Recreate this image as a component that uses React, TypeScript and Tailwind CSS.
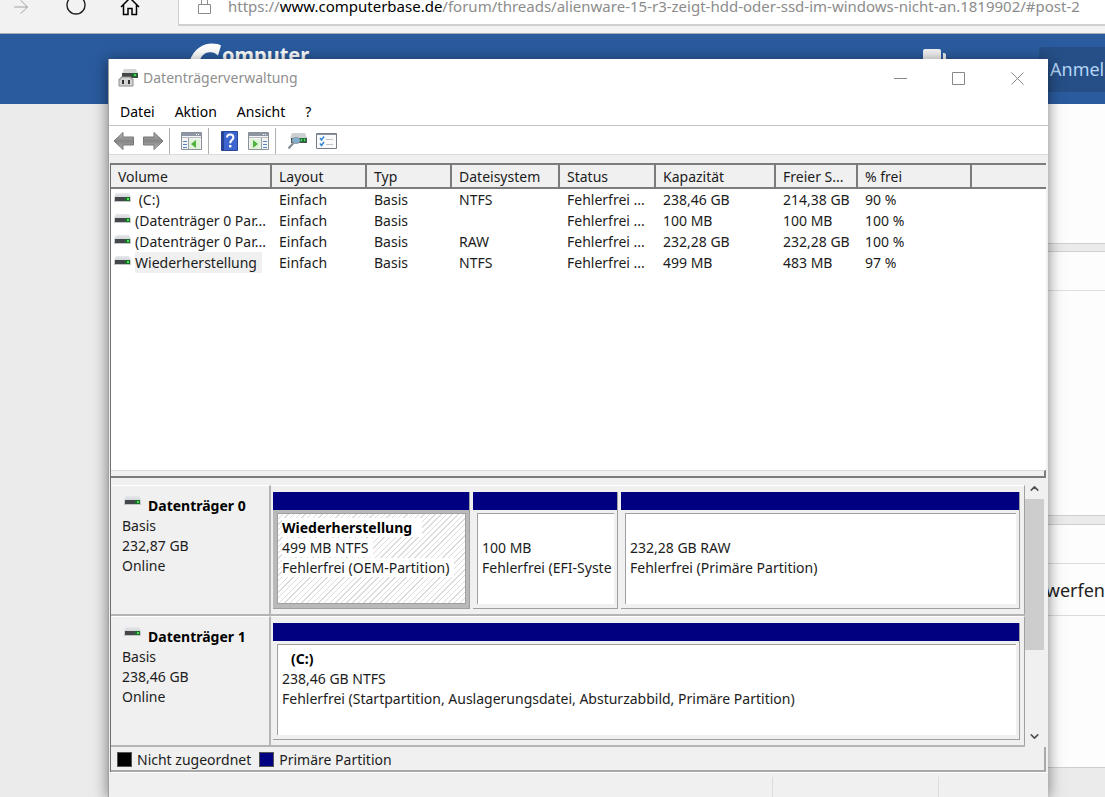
import type { ReactNode } from 'react';
import { ArrowRight, ChevronDown, ChevronUp, Lock } from 'lucide-react';

type Volume = {
  name: string;
  layout: string;
  type: string;
  fs: string;
  status: string;
  capacity: string;
  free: string;
  percent: string;
  selected?: boolean;
};

const volumes: Volume[] = [
  { name: '\u00a0(C:)', layout: 'Einfach', type: 'Basis', fs: 'NTFS', status: 'Fehlerfrei ...', capacity: '238,46 GB', free: '214,38 GB', percent: '90 %' },
  { name: '(Datenträger 0 Par...', layout: 'Einfach', type: 'Basis', fs: '', status: 'Fehlerfrei ...', capacity: '100 MB', free: '100 MB', percent: '100 %' },
  { name: '(Datenträger 0 Par...', layout: 'Einfach', type: 'Basis', fs: 'RAW', status: 'Fehlerfrei ...', capacity: '232,28 GB', free: '232,28 GB', percent: '100 %' },
  { name: 'Wiederherstellung', layout: 'Einfach', type: 'Basis', fs: 'NTFS', status: 'Fehlerfrei ...', capacity: '499 MB', free: '483 MB', percent: '97 %', selected: true },
];

const columns = ['Volume', 'Layout', 'Typ', 'Dateisystem', 'Status', 'Kapazität', 'Freier S...', '% frei', ''];

function DiskIcon() {
  return (
    <svg width="17" height="10" viewBox="0 0 17 10" className="shrink-0" aria-hidden="true">
      <defs>
        <linearGradient id="disk" x1="0" x2="0" y1="0" y2="1">
          <stop offset="0" stopColor="#e6e8eb" />
          <stop offset="1" stopColor="#bfc3c8" />
        </linearGradient>
      </defs>
      <path d="M2 0h13l2 4v5H0V4z" fill="url(#disk)" />
      <path d="M1 4h15v4H1z" fill="#43474a" />
      <path d="M11 4h5v4h-5z" fill="#1f6b2c" />
      <path d="M13 5h2v2h-2z" fill="#4be25a" />
    </svg>
  );
}

function AppIcon() {
  return (
    <svg width="20" height="20" viewBox="0 0 20 20" className="shrink-0" aria-hidden="true">
      <path d="M6 1h12l2 5H4z" fill="#d2d4d6" />
      <path d="M4 5h16v5H4z" fill="#454849" />
      <path d="M14 5h5v4h-5z" fill="#1f6b2c" />
      <path d="M16 6h2v2h-2z" fill="#4bd25a" />
      <path d="M3 9h10v2h2v7H1v-7h2z" fill="#d4d4d4" stroke="#8c8c8c" />
      <path d="M4 12h2v4H4zM10 12h2v4h-2z" fill="#333" />
    </svg>
  );
}

function ArrowIcon({ flip }: { flip?: boolean }) {
  return (
    <svg width="22" height="20" viewBox="0 0 22 20" className={flip ? 'rotate-180' : ''} aria-hidden="true">
      <defs>
        <linearGradient id="arrow" x1="0" x2="0" y1="0" y2="1">
          <stop offset="0" stopColor="#bdbdbd" />
          <stop offset="0.5" stopColor="#858585" />
          <stop offset="1" stopColor="#b0b0b0" />
        </linearGradient>
      </defs>
      <path d="M1 10 10 1.500V6h10.500v8H10v4.500z" fill="url(#arrow)" stroke="#777" strokeLinejoin="round" />
    </svg>
  );
}

function PaneIcon({ right }: { right?: boolean }) {
  return (
    <svg width="21" height="18" viewBox="0 0 21 18" aria-hidden="true">
      <path d="M.5.5h20v17H.5z" fill="#f4f4f4" stroke="#8b9098" />
      <path d="M1 1h19v3H1z" fill="#8d96a5" />
      <path d="M15 2h1v1h-1zM17 2h1v1h-1z" fill="#fff" />
      <path d="M1 5.500h19" stroke="#b5bac2" />
      {right ? (
        <>
          <path d="M2 7h11v10H2z" fill="#e2f3dc" />
          <path d="m5 8 5 4-5 4z" fill="#4db33d" />
          <path d="M13.500 6v11" stroke="#9aa1ab" />
          <path d="M15 9.500h4M15 12.500h4M15 15.500h4" stroke="#5a86bf" />
        </>
      ) : (
        <>
          <path d="M8 7h11v10H8z" fill="#e2f3dc" />
          <path d="m15 8-5 4 5 4z" fill="#4db33d" />
          <path d="M7.500 6v11" stroke="#9aa1ab" />
          <path d="M2 9.500h4M2 12.500h4M2 15.500h4" stroke="#5a86bf" />
        </>
      )}
    </svg>
  );
}

function HelpIcon() {
  return (
    <svg width="17" height="20" viewBox="0 0 17 20" aria-hidden="true">
      <path d="M.5.5h16v19H.5z" fill="#3d65cf" stroke="#2a4699" />
      <path d="M1 1h2v18H1z" fill="#274293" />
      <path d="M6 6.500C6 4.500 7.300 3.500 9.200 3.500s3.200 1.100 3.200 3c0 2.600-3.200 2.600-3.200 5.700" fill="none" stroke="#fff" strokeWidth="2" />
      <path d="M8 14h2.400v2.400H8z" fill="#fff" />
    </svg>
  );
}

function SearchDiskIcon() {
  return (
    <svg width="20" height="18" viewBox="0 0 20 18" aria-hidden="true">
      <path d="M4 1h13l2 5H2z" fill="#cdd0d3" />
      <path d="M3 6h16v5H3z" fill="#4b5154" />
      <path d="M12 6h6v4h-6z" fill="#1f7a38" />
      <path d="M13 7h1v2h-1zM16 7h1v2h-1z" fill="#5fe07a" />
      <ellipse cx="8" cy="8.500" rx="4" ry="3" fill="#7fb0d4" stroke="#8b979f" />
      <path d="m5.500 11-5 5.500" stroke="#7f8b93" strokeWidth="2" />
    </svg>
  );
}

function ChecklistIcon() {
  return (
    <svg width="21" height="16" viewBox="0 0 21 16" aria-hidden="true">
      <path d="M.5.5h20v15H.5z" fill="#fafafa" stroke="#777d85" />
      <path d="M1 1.500h19" stroke="#8d96a5" />
      <path d="m4 5 1.500 2L8 3.500M4 10.500l1.500 2L8 9" fill="none" stroke="#2f86d3" strokeWidth="1.500" />
      <path d="M10 6.500h7M10 11.500h7" stroke="#bfc4ca" />
    </svg>
  );
}

function ToolButton({ label, children }: { label: string; children: ReactNode }) {
  return (
    <button type="button" aria-label={label} className="flex w-[29px] items-center justify-center">
      {children}
    </button>
  );
}

function Partition({ selected, className, children }: { selected?: boolean; className: string; children: ReactNode }) {
  return (
    <div className={`flex min-w-0 flex-col border-r border-b border-[#a0a0a0] ${className}`}>
      <div className="h-[18px] bg-[#000080]" />
      <div
        className={
          selected
            ? 'flex-1 border-4 border-t-3 border-r-3 border-[#b9b9b9]'
            : 'flex-1 border-4 border-t-3 border-r-3 border-[#f0f0f0]'
        }
      >
        <div
          className={`h-full overflow-hidden border-t border-l border-[#a0a0a0] pt-1 pl-1 leading-5 whitespace-nowrap ${
            selected
              ? 'border-r border-b bg-[repeating-linear-gradient(135deg,#ffffff_0px,#ffffff_3px,#dcdcdc_3px,#dcdcdc_4px)]'
              : 'bg-white'
          }`}
        >
          {children}
        </div>
      </div>
    </div>
  );
}

function DiskRow({ name, size, children }: { name: string; size: string; children: ReactNode }) {
  return (
    <section className="flex h-[131px] border-b-2 border-[#b5b5b5]">
      <div className="w-[160px] shrink-0 border-t border-r-2 border-t-white border-r-[#b5b5b5] pt-[10px] pl-[11px] leading-5">
        <h2 className="flex gap-[7px] pl-[2px] font-bold text-black">
          <DiskIcon />
          <span>{name}</span>
        </h2>
        <p>Basis</p>
        <p>{size}</p>
        <p>Online</p>
      </div>
      <div className="flex min-w-0 flex-1 gap-[3px] border-t border-r border-t-white border-r-[#a0a0a0] pt-[6px] pr-1 pb-[5px] pl-[2px]">
        {children}
      </div>
    </section>
  );
}

function BrowserPage() {
  return (
    <div className="flex min-h-full flex-col">
      <div className="flex h-[34px] items-start border-b border-[#a9adb3] bg-[#f2f2f2]">
        <div className="flex w-[178px] shrink-0 items-start pl-[10px]">
          <button type="button" aria-label="Vorwärts" className="-mt-1 w-[56px] text-[#9a9a9a]">
            <ArrowRight size={22} strokeWidth={1} />
          </button>
          <button type="button" aria-label="Aktualisieren" className="-mt-1 w-[54px] text-[#222]">
            <svg width="20" height="20" viewBox="0 0 20 20" fill="none" stroke="currentColor" strokeWidth="1.400" aria-hidden="true">
              <path d="M5 1.500a9 9 0 1 0 10 0" />
            </svg>
          </button>
          <button type="button" aria-label="Startseite" className="-mt-1 text-black">
            <svg width="20" height="20" viewBox="0 0 20 20" fill="none" stroke="currentColor" strokeWidth="1.500" aria-hidden="true">
              <path d="M1 11 10 2l9 9M3.500 9v9.500h4.500v-6h4v6h4.500V9" />
            </svg>
          </button>
        </div>
        <div className="flex h-[26px] min-w-0 flex-1 items-start border-b-2 border-l border-[#d0d0d0] bg-white pl-[19px] text-[#8c8c8c]">
          <svg width="13" height="16" viewBox="0 0 13 16" fill="none" stroke="currentColor" className="-mt-[2px] shrink-0" aria-hidden="true">
            <path d="M.5 6.500h12v9H.5zM3.500 6.500V3a3 3 0 0 1 6 0v3.500" />
          </svg>
          <p className="ml-[17px] text-[15px] leading-[13px] whitespace-nowrap">
            https://<span className="text-black">www.computerbase.de</span>/forum/threads/alienware-15-r3-zeigt-hdd-oder-ssd-im-windows-nicht-an.1819902/#post-2
          </p>
        </div>
      </div>

      <header className="flex h-[70px] items-start justify-between bg-[#2a5b9e] pl-[188px]">
        <a href="#start" aria-label="ComputerBase" className="flex pt-[9px] text-white">
          <svg width="34" height="32" viewBox="0 0 34 32" aria-hidden="true">
            <path d="M0 24C3 9 12 1 23 .5q8 0 10 2l-3 10c-3-3-6-4-10-3-6 1-9 7-9 14v8H0z" fill="#fff" />
          </svg>
          <span className="text-[20px] leading-6 font-bold">omputer</span>
        </a>
        <div className="flex">
          <svg width="24" height="24" viewBox="0 0 24 24" className="mt-[14px] mr-[92px]" aria-hidden="true">
            <rect width="18" height="14" y="1" rx="2" fill="#f2f2f2" />
            <path d="M20 5h1q2 0 2 2v10h-3z" fill="#f2f2f2" />
          </svg>
          <a href="#login" className="mt-[13px] h-[45px] w-[66px] rounded-l bg-[#264f87] pl-[11px] text-[18px] leading-[45px] text-[#b4d6f7]">
            Anmel
          </a>
        </div>
      </header>

      <main className="flex-1 bg-[#ebebeb] pl-[190px]">
        <div className="h-[139px] bg-[#fdfdfd]" />
        <div className="h-[9px] border-t border-b border-[#cfcfcf]" />
        <div className="h-[263px] bg-[#fdfdfd]">
          <div className="h-[39px] border-b border-[#e0e0e0]" />
        </div>
        <div className="h-[10px] border-t border-b border-[#cfcfcf]" />
        <div className="flex h-[243px] flex-col border-b border-[#cfcfcf] bg-[#fdfdfd]">
          <div className="h-[39px] border-b border-[#dcdcdc]" />
          <p className="h-[52px] border-b border-[#dcdcdc] text-right text-[18px] leading-[52px] text-[#222]">werfen</p>
        </div>
      </main>
    </div>
  );
}

function DiskManagement() {
  return (
    <div className="flex h-full flex-col border-l border-[#a0a0a0] bg-[#f0f0f0] shadow-[0_2px_14px_rgba(0,0,0,0.5)]">
      <div className="flex h-[38px] shrink-0 items-center justify-between bg-white pr-px pl-[9px]">
        <div className="flex items-center gap-[5px] text-[#8f8f8f]">
          <AppIcon />
          <h1 className="pb-px text-[14px]">Datenträgerverwaltung</h1>
        </div>
        <div className="flex text-[#888]">
          <button type="button" aria-label="Minimieren" className="flex w-[58px] justify-center">
            <svg width="13" height="13" viewBox="0 0 13 13" stroke="currentColor" aria-hidden="true">
              <path d="M0 6.500h13" />
            </svg>
          </button>
          <button type="button" aria-label="Maximieren" className="flex w-[58px] justify-center">
            <svg width="13" height="13" viewBox="0 0 13 13" fill="none" stroke="currentColor" aria-hidden="true">
              <path d="M.5.5h12v12H.5z" />
            </svg>
          </button>
          <button type="button" aria-label="Schließen" className="flex w-[60px] justify-center">
            <svg width="13" height="13" viewBox="0 0 13 13" stroke="currentColor" aria-hidden="true">
              <path d="m.5.5 12 12M12.500.5l-12 12" />
            </svg>
          </button>
        </div>
      </div>

      <nav className="flex h-[29px] shrink-0 items-center gap-5 border-b border-[#c4c4c4] bg-white pl-[11px] text-black">
        <button type="button">Datei</button>
        <button type="button">Aktion</button>
        <button type="button">Ansicht</button>
        <button type="button">?</button>
      </nav>

      <div className="flex h-[29px] shrink-0 items-center border-b border-[#dadada] bg-white pt-[2px]">
        <ToolButton label="Zurück"><ArrowIcon /></ToolButton>
        <ToolButton label="Vorwärts"><ArrowIcon flip /></ToolButton>
        <div className="mr-[7px] ml-[2px] h-[26px] border-l border-[#b0b0b0]" />
        <ToolButton label="Konsolenstruktur"><PaneIcon /></ToolButton>
        <div className="mr-[6px] ml-[2px] h-[26px] border-l border-[#b0b0b0]" />
        <ToolButton label="Hilfe"><HelpIcon /></ToolButton>
        <ToolButton label="Aktionsbereich"><PaneIcon right /></ToolButton>
        <div className="mr-[7px] ml-[2px] h-[26px] border-l border-[#b0b0b0]" />
        <ToolButton label="Datenträger neu einlesen"><SearchDiskIcon /></ToolButton>
        <ToolButton label="Eigenschaften"><ChecklistIcon /></ToolButton>
      </div>

      <div className="mt-2 mr-[2px] ml-px flex min-h-0 flex-1 flex-col border-l border-[#6e6e6e]">
        <div className="min-h-[120px] flex-1 overflow-hidden border-t-2 border-[#7c7c7c] bg-white">
          <table className="w-full table-fixed border-separate border-spacing-0 text-left">
            <colgroup>
              <col className="w-[161px]" />
              <col className="w-[95px]" />
              <col className="w-[85px]" />
              <col className="w-[108px]" />
              <col className="w-[96px]" />
              <col className="w-[120px]" />
              <col className="w-[82px]" />
              <col className="w-[114px]" />
              <col />
            </colgroup>
            <thead>
              <tr>
                {columns.map((column) => (
                  <th
                    key={column}
                    className="h-[24px] overflow-hidden border-r-2 border-b-2 border-[#7c7c7c] bg-[#f0f0f0] pt-[2px] pb-0 pl-[7px] leading-5 font-normal whitespace-nowrap last:border-r-0"
                  >
                    {column}
                  </th>
                ))}
              </tr>
            </thead>
            <tbody>
              {volumes.map((v, i) => (
                <tr key={i} className="h-[21px] whitespace-nowrap">
                  <td className="p-0">
                    <div className="flex items-start gap-1 pl-[3px]">
                      <span className="pt-1">
                        <DiskIcon />
                      </span>
                      <span className={v.selected ? 'bg-[#f0f0f0] pr-[5px]' : ''}>{v.name}</span>
                    </div>
                  </td>
                  <td className="p-0 pl-[7px]">{v.layout}</td>
                  <td className="p-0 pl-[7px]">{v.type}</td>
                  <td className="p-0 pl-[7px]">{v.fs}</td>
                  <td className="p-0 pl-[7px]">{v.status}</td>
                  <td className="p-0 pl-[7px]">{v.capacity}</td>
                  <td className="p-0 pl-[7px]">{v.free}</td>
                  <td className="p-0 pl-[7px]">{v.percent}</td>
                  <td className="p-0" />
                </tr>
              ))}
            </tbody>
          </table>
        </div>

        {/* Splitter */}
        <div className="h-[8px] shrink-0 border-t border-r-2 border-b-2 border-t-[#dcdcdc] border-r-[#7c7c7c] border-b-[#7c7c7c]" />

        <div className="flex shrink-0">
          <div className="min-w-0 flex-1 pt-[7px]">
            <DiskRow name="Datenträger 0" size="232,87 GB">
              <Partition selected className="w-[197px] shrink-0">
                <p className="font-bold text-black"><span className="bg-white pr-[10px]">Wiederherstellung</span></p>
                <p><span className="bg-white pr-[5px]">499 MB NTFS</span></p>
                <p><span className="bg-white pr-[5px]">Fehlerfrei (OEM-Partition)</span></p>
              </Partition>
              <Partition className="w-[145px] shrink-0">
                <p className="mt-5">100 MB</p>
                <p>Fehlerfrei (EFI-Syste</p>
              </Partition>
              <Partition className="flex-1">
                <p className="mt-5">232,28 GB RAW</p>
                <p>Fehlerfrei (Primäre Partition)</p>
              </Partition>
            </DiskRow>
            <DiskRow name="Datenträger 1" size="238,46 GB">
              <Partition className="flex-1">
                <p className="pl-[9px] font-bold text-black">(C:)</p>
                <p>238,46 GB NTFS</p>
                <p>Fehlerfrei (Startpartition, Auslagerungsdatei, Absturzabbild, Primäre Partition)</p>
              </Partition>
            </DiskRow>
          </div>
          <div className="flex w-[21px] flex-col pr-[2px] text-[#505050]">
            <button type="button" aria-label="Nach oben" className="flex h-[21px] items-center justify-center">
              <ChevronUp size={13} strokeWidth={3} />
            </button>
            <div className="h-[151px] bg-[#cdcdcd]" />
            <button type="button" aria-label="Nach unten" className="mt-auto flex h-[21px] items-center justify-center">
              <ChevronDown size={13} strokeWidth={3} />
            </button>
          </div>
        </div>

        <div className="flex h-[25px] shrink-0 items-center border-r-2 border-b-2 border-[#a9a9a9] pt-[2px] pl-[6px]">
          <span className="mr-[5px] size-[15px] border border-[#555] bg-black" />
          <span>Nicht zugeordnet</span>
          <span className="mr-[5px] ml-[8px] size-[15px] border border-[#555] bg-[#000080]" />
          <span>Primäre Partition</span>
        </div>
      </div>

      <footer className="flex h-[25px] shrink-0 border-t border-white pt-1">
        <div className="flex-1 border-r border-[#dcdcdc]" />
        <div className="w-[166px] border-r border-[#dcdcdc]" />
        <div className="w-[109px]" />
      </footer>
    </div>
  );
}

export default function App() {
  return (
    <div className="relative h-screen overflow-hidden bg-[#ebebeb] font-['Noto_Sans','Open_Sans',sans-serif] text-[14px] text-[#1c1c1c]">
      <BrowserPage />
      {/* The window floats over the browser */}
      <div className="absolute top-[59px] right-[57px] bottom-0 left-[108px]">
        <DiskManagement />
      </div>
    </div>
  );
}
